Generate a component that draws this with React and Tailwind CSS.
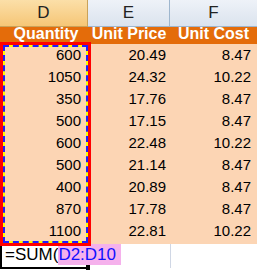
import React from "react";

const rows = [
  ["600", "20.49", "8.47"],
  ["1050", "24.32", "10.22"],
  ["350", "17.76", "8.47"],
  ["500", "17.15", "8.47"],
  ["600", "22.48", "10.22"],
  ["500", "21.14", "8.47"],
  ["400", "20.89", "8.47"],
  ["870", "17.78", "8.47"],
  ["1100", "22.81", "10.22"],
];

export default function App() {
  return (
    <div
      className="relative w-[257px] h-[270px] overflow-hidden bg-white"
      style={{ fontFamily: '"Liberation Sans", Arial, sans-serif' }}
    >
      {/* column headers */}
      <div className="grid grid-cols-[88px_82px_87px] h-[22px] text-[17px] text-[#222]">
        <div className="flex items-center justify-center bg-gradient-to-b from-[#fbdfa8] to-[#f6c676] border-r border-b border-[#c9a25a]">D</div>
        <div className="flex items-center justify-center bg-gradient-to-b from-[#eef2f8] to-[#dbe3ee] border-r border-b border-[#9eb6ce]">E</div>
        <div className="flex items-center justify-center bg-gradient-to-b from-[#eef2f8] to-[#dbe3ee] border-b border-[#9eb6ce]">F</div>
      </div>

      {/* title row */}
      <div className="grid grid-cols-[88px_82px_87px] h-[22px] bg-[#e46c0a] text-white font-bold text-[16px]">
        <div className="flex items-center justify-center pl-[4px]">Quantity</div>
        <div className="flex items-center justify-center">Unit Price</div>
        <div className="flex items-center justify-center">Unit Cost</div>
      </div>

      {/* data */}
      <div className="bg-[#fcd5b4] text-[15px] text-black">
        {rows.map((r, i) => (
          <div key={i} className="grid grid-cols-[88px_82px_87px] h-[22px] items-center">
            <div className="text-right pr-[7px]">{r[0]}</div>
            <div className="text-right pr-[4px]">{r[1]}</div>
            <div className="text-right pr-[6px]">{r[2]}</div>
          </div>
        ))}
        <div className="h-[2px]" />
      </div>

      {/* formula row */}
      <div className="grid grid-cols-[170px_87px] h-[24px]">
        <div className="relative flex items-start text-[17px] leading-[21px] border-l-2 border-black">
          <span className="pl-[3px] text-black">=SUM(</span>
          <span className="bg-[#f5b1ec] text-[#1010ff] pr-[5px]">D2:D10</span>
        </div>
        <div className="border-l border-[#d0d7e5]" />
      </div>

      {/* edited cell bottom edge + fill handle */}
      <div className="absolute left-0 top-[267px] w-[86px] h-[2px] bg-black" />
      <div className="absolute left-[86px] top-[265px] w-[4px] h-[5px] bg-black" />

      {/* reference highlight box */}
      <div className="absolute left-0 top-[42px] w-[91px] h-[204px] border-[3px] border-[#ff0000]">
        <div className="absolute inset-0 border-2 border-[#ffff00]">
          <div className="absolute -inset-[2px] border-2 border-dashed border-[#1c1cff]" />
        </div>
      </div>
    </div>
  );
}
